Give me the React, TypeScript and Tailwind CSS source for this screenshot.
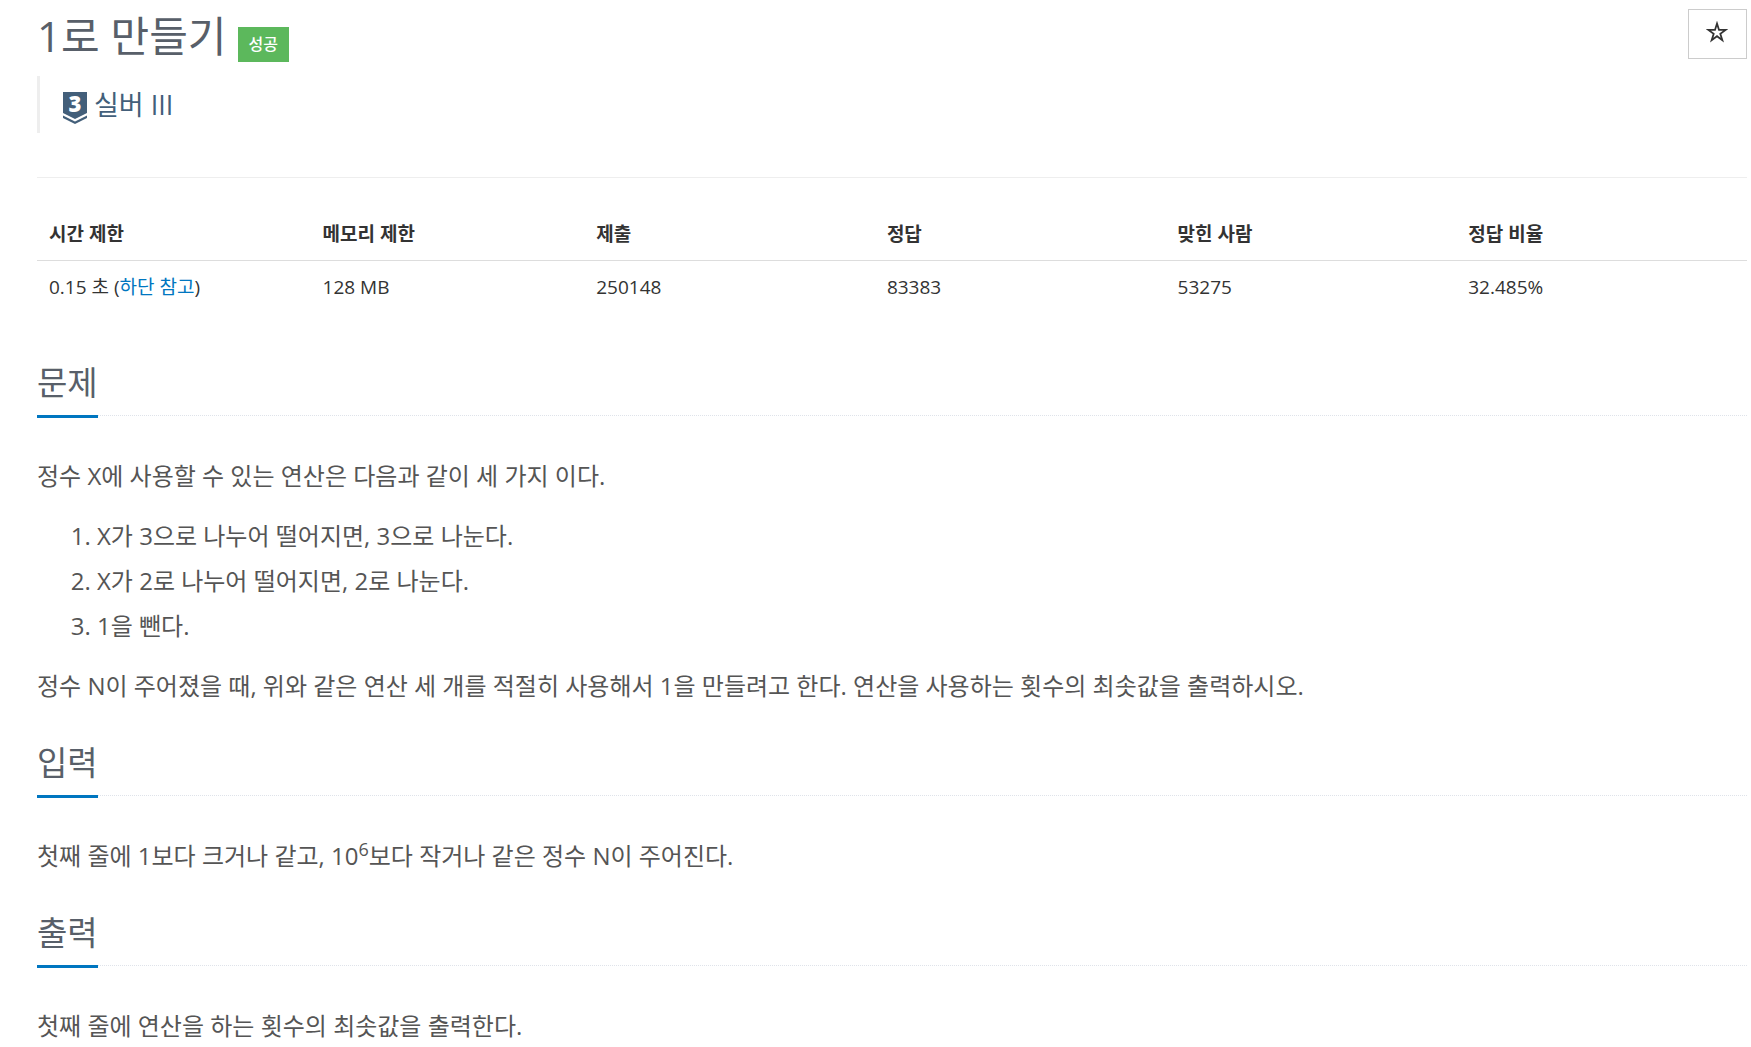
import type { ReactNode } from "react";

const stats = [
  { label: "시간 제한", width: "w-[16%]", value: <>0.15 초 (<a href="#limit" className="text-[#0076c0]">하단 참고</a>)</> },
  { label: "메모리 제한", width: "w-[16%]", value: "128 MB" },
  { label: "제출", width: "w-[17%]", value: "250148" },
  { label: "정답", width: "w-[17%]", value: "83383" },
  { label: "맞힌 사람", width: "w-[17%]", value: "53275" },
  { label: "정답 비율", width: "w-[17%]", value: "32.485%" },
];

function TierBadge() {
  return (
    <svg viewBox="0 0 24 32" className="mt-1.5 h-8 w-6 shrink-0 overflow-visible" role="img" aria-label="실버 3">
      <path d="M0 0H24V21L12 27L0 21Z" fill="#435f7a" />
      <path d="M0 23.5L12 29.5L24 23.5V26L12 32L0 26Z" fill="#435f7a" />
      <text x="12" y="20" textAnchor="middle" fill="#fff" className="font-['Open_Sans',sans-serif] text-[22px] leading-none font-extrabold">3</text>
    </svg>
  );
}

function Section({ title, children }: { title: string; children: ReactNode }) {
  return (
    <section className="mb-[29px]">
      <div className="mb-[37px] flex border-b border-dotted border-[#dfe3ea]">
        <h2 className="-mb-[3px] border-b-[3px] border-[#0076c0] pt-[3px] pb-[9px] text-[33px] leading-[46px] text-[#585f69]">{title}</h2>
      </div>
      <div className="flex flex-col gap-[15px] text-2xl leading-[45px] text-[#555]">{children}</div>
    </section>
  );
}

export default function App() {
  return (
    <main className="bg-white pr-1 pl-[37px] font-['Open_Sans','Noto_Sans_CJK_KR',sans-serif] text-[#333]">
      <header className="flex items-start justify-between pt-[9px]">
        <div className="flex items-end gap-[11px]">
          <h1 className="text-[42px] leading-[53px] text-[#585f69]">1로 만들기</h1>
          <span className="bg-[#5cb85c] px-[11px] text-base leading-[35px] font-medium text-white">성공</span>
        </div>
        <button type="button" aria-label="즐겨찾기" className="flex h-[50px] w-[59px] items-center justify-center border border-[#ccc]">
          <svg viewBox="0 0 22 22" className="mr-0.5 mb-1 size-[22px]" aria-hidden="true">
            <path d="M11 2.6L13 8.9H19.6L14.3 12.8L16.3 19.1L11 15.2L5.7 19.1L7.7 12.8L2.4 8.9H9Z" fill="none" stroke="#333" strokeWidth="1.8" />
          </svg>
        </button>
      </header>
      <blockquote className="mt-[14px] flex h-[57px] items-center gap-[7px] border-l-[3px] border-[#eee] pl-[23px]">
        <TierBadge />
        <a href="#tier" className="text-[27px] leading-9 text-[#435f7a]">실버 III</a>
      </blockquote>
      <hr className="mt-11 border-[#eee]" />
      <table className="mt-[30px] mb-[44px] w-full table-fixed text-left text-[19px] leading-[26px]">
        <thead>
          <tr className="border-b border-[#ddd]">
            {stats.map((s) => (
              <th key={s.label} scope="col" className={`${s.width} px-3 pt-[13px] pb-[13px] font-bold`}>{s.label}</th>
            ))}
          </tr>
        </thead>
        <tbody>
          <tr>
            {stats.map((s) => (
              <td key={s.label} className="px-3 py-[13px]">{s.value}</td>
            ))}
          </tr>
        </tbody>
      </table>
      <Section title="문제">
        <p>정수 X에 사용할 수 있는 연산은 다음과 같이 세 가지 이다.</p>
        <ol className="list-decimal pl-[60px]">
          <li>X가 3으로 나누어 떨어지면, 3으로 나눈다.</li>
          <li>X가 2로 나누어 떨어지면, 2로 나눈다.</li>
          <li>1을 뺀다.</li>
        </ol>
        <p>정수 N이 주어졌을 때, 위와 같은 연산 세 개를 적절히 사용해서 1을 만들려고 한다. 연산을 사용하는 횟수의 최솟값을 출력하시오.</p>
      </Section>
      <Section title="입력">
        <p>첫째 줄에 1보다 크거나 같고, 10<sup className="text-lg">6</sup>보다 작거나 같은 정수 N이 주어진다.</p>
      </Section>
      <Section title="출력">
        <p>첫째 줄에 연산을 하는 횟수의 최솟값을 출력한다.</p>
      </Section>
    </main>
  );
}
